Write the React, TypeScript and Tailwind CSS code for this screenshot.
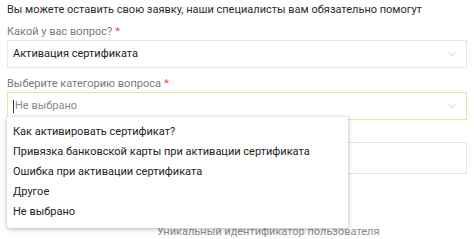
import { ChevronDown } from "lucide-react";

const options = [
  "Как активировать сертификат?",
  "Привязка банковской карты при активации сертификата",
  "Ошибка при активации сертификата",
  "Другое",
  "Не выбрано",
];

function Label({ text }: { text: string }) {
  return (
    <div className="h-4 text-[11px] leading-4 text-[#7a7a7a]">
      {text}
      <span className="ml-[3px] text-[#e8504a]">*</span>
    </div>
  );
}

export default function App() {
  return (
    <div className="relative h-[239px] w-[474px] overflow-hidden bg-white px-[7px] font-['Roboto',sans-serif]">
      <div className="h-5 text-[11px] leading-5 text-[#2b2b2b]">
        Вы можете оставить свою заявку, наши специалисты вам обязательно помогут
      </div>

      <div className="mt-[3px] pt-px">
        <Label text="Какой у вас вопрос?" />
      </div>
      <div className="flex h-[28px] items-center justify-between border border-[#e6e6e6] pl-[5px] pr-[8px] text-[11px] text-[#222]">
        <span>Активация сертификата</span>
        <ChevronDown className="h-3 w-3 text-[#b5b5b5]" strokeWidth={1.5} />
      </div>

      <div className="mt-[7px] pt-px">
        <Label text="Выберите категорию вопроса" />
      </div>
      <div className="flex h-[28px] items-center justify-between border border-[#f0e19c] pl-[5px] pr-[8px] text-[11px] text-[#8a8a8a]">
        <span className="flex items-center">
          <span className="mr-[1px] h-[13px] w-px bg-[#333]" />
          Не выбрано
        </span>
        <ChevronDown className="h-3 w-3 text-[#b5b5b5]" strokeWidth={1.5} />
      </div>

      <div className="mt-[22px] h-[32px] border border-[#e6e6e6]" />

      <div className="mt-[50px] pl-[150px] text-[11px] leading-4 text-[#8a8a8a]">
        Уникальный идентификатор пользователя
      </div>

      <div className="absolute left-[7px] top-[117px] w-[341px] rounded-b-[3px] bg-white pb-[6px] pt-[5px] shadow-[0_1px_5px_rgba(0,0,0,0.3)]">
        {options.map((o) => (
          <div
            key={o}
            className="h-5 px-[6px] text-[11px] leading-5 text-[#222]"
          >
            {o}
          </div>
        ))}
      </div>
    </div>
  );
}
